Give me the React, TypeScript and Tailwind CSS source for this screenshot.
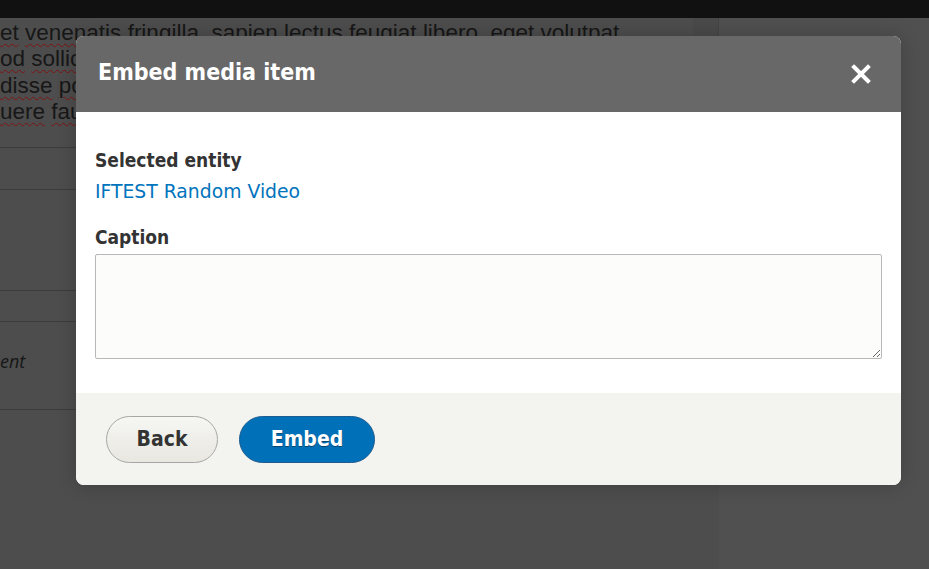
const bgLines = [
  ['et', 'venenatis', 'fringilla,', 'sapien', 'lectus', 'feugiat', 'libero,', 'eget', 'volutpat'],
  ['od', 'sollicitudin', 'quam'],
  ['disse', 'potenti', 'nulla'],
  ['uere', 'faucibus', 'orci'],
]

// bold text in the dialog is narrower than DejaVu's regular bold
const boldFont = "font-['DejaVu_Sans_Condensed','DejaVu_Sans',sans-serif] font-stretch-condensed font-bold"

function DialogHeader() {
  return (
    <div className="h-[76px] bg-[#686868] rounded-t-lg flex items-center justify-between pl-[22px] pr-[30px]">
      <h2 className={`${boldFont} text-white text-[23px] leading-[28px] -mt-[4px]`}>Embed media item</h2>
      <button className="w-5 h-5 flex items-center justify-center">
        <svg width="20" height="20" viewBox="0 0 20 20">
          <path d="M3 3 L17 17 M17 3 L3 17" stroke="#fff" strokeWidth="4" strokeLinecap="square" />
        </svg>
      </button>
    </div>
  )
}

export default function App() {
  return (
    <div className="w-[929px] h-[569px] overflow-hidden bg-[#4d4d4d] relative font-['DejaVu_Sans',sans-serif]">
      <div className="h-[18px] bg-[#111111]" />
      <div className="flex">
        {/* page behind the overlay */}
        <div className="w-[719px] shrink-0 flex">
          <div className="w-[693px]">
            <div className="h-[130px] pt-[2px] border-b border-[#3c3c3c] font-['Liberation_Sans',Arial,sans-serif] text-[22.5px] leading-[26.3px] text-[#171717]">
              {bgLines.map((words, i) => (
                <div key={i} className="whitespace-nowrap">
                  {words.map((w, j) => (
                    <span key={j}>
                      <span className="underline decoration-wavy decoration-[#7e1313] decoration-[1.25px] underline-offset-[3px]">{w}</span>{' '}
                    </span>
                  ))}
                </div>
              ))}
            </div>
            <div className="h-[42px] border-b border-[#3c3c3c]" />
            <div className="h-[101px] border-b border-[#3c3c3c]" />
            <div className="h-[31px] border-b border-[#3c3c3c]" />
            <div className="h-[88px] border-b border-[#3c3c3c] flex items-center">
              <span className="italic text-[18px] text-[#161616] font-['Open_Sans',sans-serif] -mt-[8px]">ent</span>
            </div>
          </div>
          <div className="w-[26px] h-[18px] bg-[#4a4a4a] border-r border-[#444]" />
        </div>
        <div className="flex-1 bg-[#505050] h-[551px]" />
      </div>

      {/* modal */}
      <div className="absolute left-[76px] top-[36px] w-[825px] rounded-lg bg-white shadow-[0_0_20px_rgba(0,0,0,0.2)]">
        <DialogHeader />
        <div className="px-[19px] pt-[36px] pb-[34px] text-[#333]">
          <div className={`${boldFont} text-[19px] leading-[24px]`}>Selected entity</div>
          <a className="block text-[18.8px] leading-[24px] mt-[8px] text-[#0074bd]">IFTEST Random Video</a>
          <label className={`${boldFont} block text-[19px] leading-[24px] mt-[21px]`}>Caption</label>
          <textarea className="block mt-[5px] w-[787px] h-[105px] bg-[#fcfcfa] border border-[#b8b8b8] rounded-[2px]" />
        </div>
        <div className="h-[92px] bg-[#f3f3ef] rounded-b-lg flex items-start gap-[21px] pt-[23px] pl-[30px]">
          <button className={`${boldFont} w-[112px] h-[47px] rounded-full border border-[#a6a6a6] bg-gradient-to-b from-[#f6f6f3] to-[#e8e7e0] text-[#333] text-[21px]`}>
            Back
          </button>
          <button className={`${boldFont} w-[136px] h-[47px] rounded-full border border-[#1e5c90] bg-[#0071b8] text-white text-[21px] [text-shadow:0_1px_1px_rgba(0,0,0,0.4)]`}>
            Embed
          </button>
        </div>
      </div>
    </div>
  )
}
